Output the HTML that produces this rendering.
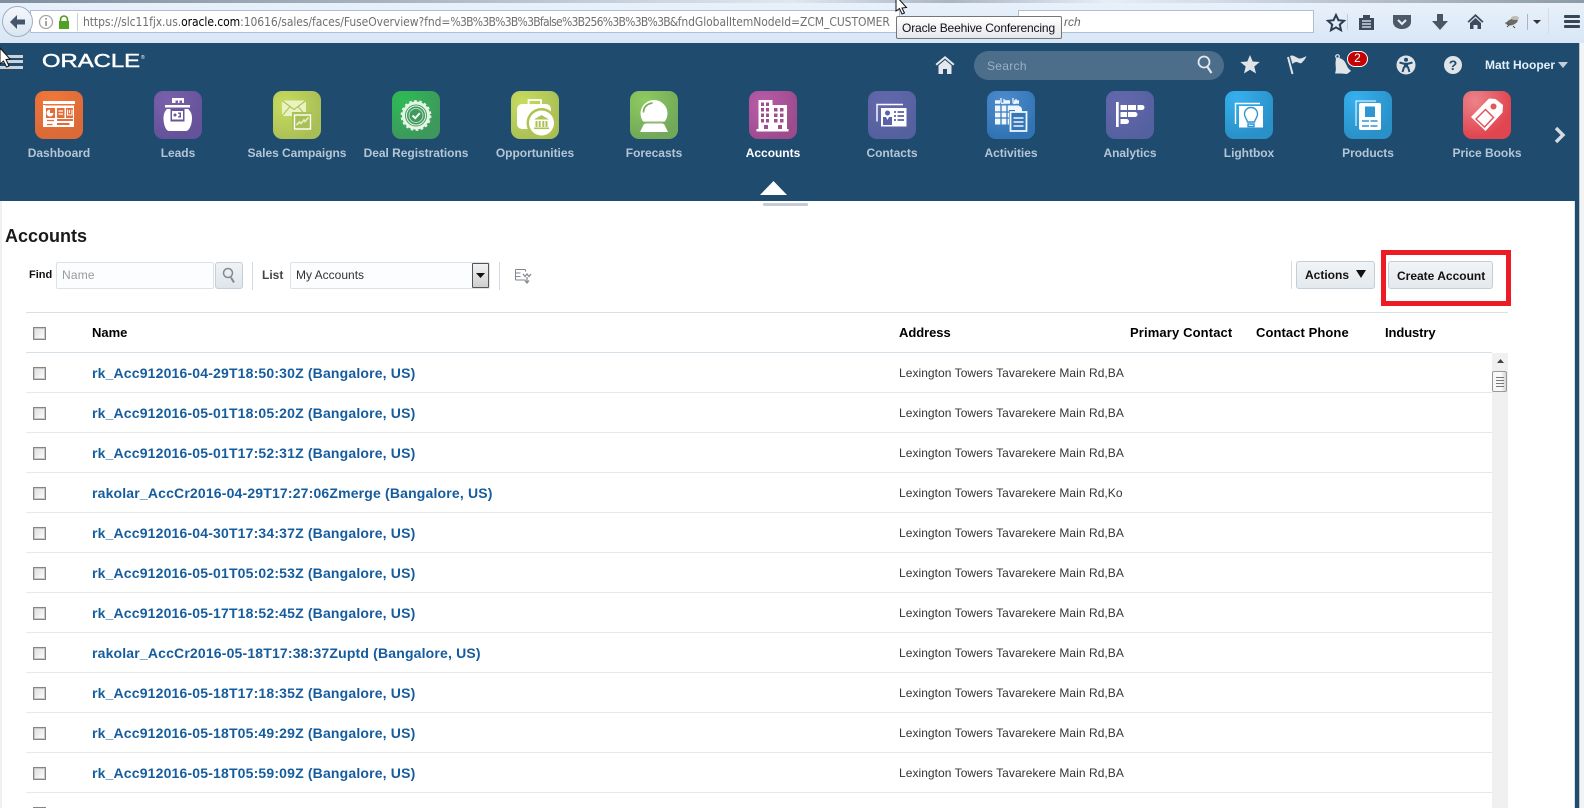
<!DOCTYPE html>
<html lang="en"><head><meta charset="utf-8"><title>Accounts</title>
<style>
html,body{margin:0;padding:0;width:1584px;height:808px;overflow:hidden;background:#fff}
body{position:relative;font-family:"Liberation Sans",Arial,sans-serif}
div,span,a,svg{position:absolute;display:block}
.t{white-space:nowrap}
#chrome{left:0;top:0;width:1584px;height:43px;background:linear-gradient(#eaf2fb,#d8e6f6)}
#nav{left:0;top:43px;width:1584px;height:158px;background:#1f4b6e}
#panel{left:0;top:201px;width:1575px;height:607px;background:#fff;border-radius:0 3px 0 0}
.ic{top:91px;width:48px;height:48px;border-radius:9px}
.lb{top:145px;width:140px;text-align:center;font-size:12px;font-weight:bold;color:#b4c6d6;line-height:16px;white-space:nowrap;letter-spacing:-.03px}
.sep{width:1px;height:28px;top:261px;background:#d5dde4}
.btn{border:1px solid #c4ced7;border-radius:3px;background:linear-gradient(#f1f4f6,#e4e9ed);box-sizing:border-box;top:261px;height:28px}
.hd{top:325px;font-size:13px;font-weight:bold;color:#000;line-height:16px;white-space:nowrap}
.ln{left:26px;width:1466px;height:1px;background:#e8e8e8}
.cb{left:33px;width:11px;height:11px;border:1px solid #858585;outline:1px solid #c8c8c8;outline-offset:-2px;background:linear-gradient(135deg,#dcdcdc,#fff)}
.nm{left:92px;font-size:14px;font-weight:bold;color:#145c9e;line-height:16px;white-space:nowrap;letter-spacing:.17px;text-decoration:none}
.ad{left:899px;width:228px;overflow:hidden;font-size:12px;color:#333;line-height:16px;white-space:nowrap;letter-spacing:.05px}
</style></head><body>

<div id="chrome">
  <div style="left:0;top:0;width:1584px;height:3px;background:linear-gradient(90deg,#7f8fa0,#a8b4c2 25%,#dfe7f0 50%,#a9b5c2 60%,#e6eef8 70%,#8d9aa8)"></div>
  <div style="left:30px;top:10px;width:870px;height:23px;background:#fff;border:1px solid #aebfd2;box-sizing:border-box"></div>
  <div style="left:1018px;top:10px;width:296px;height:23px;background:#fff;border:1px solid #aebfd2;box-sizing:border-box"></div>
  <div class="t" style="left:1064px;top:15px;font-size:12px;font-style:italic;color:#666;line-height:14px">rch</div>
  <div style="left:2px;top:6px;width:29px;height:29px;border-radius:50%;background:linear-gradient(#f4f8fc,#dbe6f2);border:1px solid #9fb0c4"></div>
  <svg style="left:8px;top:13px" width="20" height="18" viewBox="0 0 20 18"><path d="M9 2 L2 9 L9 16 L9 11.5 L17 11.5 L17 6.5 L9 6.5Z" fill="#46566a"/></svg>
  <svg style="left:38px;top:14px" width="16" height="16" viewBox="0 0 16 16"><circle cx="8" cy="8" r="6.5" fill="none" stroke="#a7a7a7" stroke-width="1.3"/><rect x="7.2" y="7" width="1.6" height="5" fill="#8f8f8f"/><rect x="7.2" y="4" width="1.6" height="1.7" fill="#8f8f8f"/></svg>
  <svg style="left:58px;top:15px" width="12" height="14" viewBox="0 0 12 14"><path d="M2.5 6V4.5a3.5 3.5 0 0 1 7 0V6" fill="none" stroke="#4d9a1e" stroke-width="1.6"/><rect x="1" y="6" width="10" height="8" fill="#52a024"/></svg>
  <div style="left:77px;top:13px;width:1px;height:18px;background:#c9ced4"></div>
  <div class="t" style="left:83px;top:15px;font-size:12px;line-height:15px;color:#707070;letter-spacing:-.07px;font-family:'DejaVu Sans Condensed','Liberation Sans',sans-serif;width:813px;overflow:hidden">https://slc11fjx.us.<span style="position:static;display:inline;color:#000">oracle.com</span>:10616/sales/faces/FuseOverview?fnd=<span style="position:static;display:inline;letter-spacing:-.72px">%3B%3B%3B%3Bfalse%3B256%3B%3B%3B&amp;</span>fndGlobalItemNodeId=ZCM_CUSTOMER</div>

  <!-- browser toolbar -->
  <svg style="left:1326px;top:13px" width="20" height="19" viewBox="0 0 20 19"><path d="M10 2l2.4 5.2 5.6.6-4.2 3.8 1.2 5.6L10 14.4 5 17.200l1.200-5.600L2 7.800l5.600-.6z" fill="none" stroke="#2e3d4e" stroke-width="2"/></svg>
  <div style="left:1347px;top:14px;width:1px;height:16px;background:#c2ccd8"></div>
  <svg style="left:1358px;top:13px" width="17" height="18" viewBox="0 0 17 18"><path d="M1 5h4V2h7v3h4v12H1z" fill="#3d4b5c"/><path d="M4 8h9M4 11h9M4 14h9" stroke="#e8eef6" stroke-width="1.300"/></svg>
  <svg style="left:1391px;top:13px" width="22" height="18" viewBox="0 0 22 18"><path d="M2 2h18v7c0 4-4 7-9 7s-9-3-9-7z" fill="#4b5968"/><path d="M7 7l4 4 4-4" fill="none" stroke="#e8eef6" stroke-width="2"/></svg>
  <svg style="left:1431px;top:13px" width="18" height="18" viewBox="0 0 18 18"><path d="M6 1h6v7h5l-8 9-8-9h5z" fill="#4a5562"/></svg>
  <svg style="left:1467px;top:13px" width="17" height="17" viewBox="0 0 17 17"><path d="M8.500 1L0.500 8.500l1.200 1.200 6.800-6.200 6.800 6.200 1.200-1.200z" fill="#3d4b5c"/><path d="M3 10l5.500-5 5.500 5v6h-3.500v-4h-4v4H3z" fill="#3d4b5c"/></svg>
  <svg style="left:1503px;top:14px" width="18" height="15" viewBox="0 0 18 15"><ellipse cx="9" cy="8" rx="6" ry="3" fill="#6d6a62" transform="rotate(-20 9 8)"/><ellipse cx="12" cy="4" rx="4" ry="2" fill="#c0bcb4"/><path d="M4 13l3-3M2 9l4 0M10 12l2 2" stroke="#555" stroke-width="1"/></svg>
  <div style="left:1527px;top:14px;width:1px;height:16px;background:#a9b5c2"></div>
  <svg style="left:1533px;top:20px" width="9" height="5" viewBox="0 0 9 5"><path d="M0 0h8L4 4z" fill="#333"/></svg>
  <div style="left:1548px;top:8px;width:1px;height:26px;background:#d3dde9"></div>
  <div style="left:1564px;top:15px;width:16px;height:3px;background:#3a4654;border-radius:1px"></div>
  <div style="left:1564px;top:20px;width:16px;height:3px;background:#3a4654;border-radius:1px"></div>
  <div style="left:1564px;top:25px;width:16px;height:3px;background:#3a4654;border-radius:1px"></div>
</div>

<div id="nav"></div>
<div style="left:1579px;top:43px;width:5px;height:765px;background:#f1f3f5;border-left:1px solid #bfc5cb;box-sizing:border-box"></div>
<div style="left:1575px;top:201px;width:4px;height:607px;background:#1f4b6e"></div>

<!-- top bar of nav -->
<div style="left:0;top:55px;width:23px;height:3px;background:#c9d3dc"></div>
<div style="left:0;top:60px;width:23px;height:3px;background:#c9d3dc"></div>
<div style="left:0;top:66px;width:23px;height:3px;background:#c9d3dc"></div>
<svg style="left:0;top:47px" width="12" height="22" viewBox="0 0 12 22"><path d="M0 1 L10 12 L6 12.500 L9 19 L6.500 20 L3.500 14 L0 17Z" fill="#fff" stroke="#111" stroke-width="1"/></svg>
<svg style="left:40px;top:50px" width="108" height="20" viewBox="0 0 108 20"><text x="2" y="17" font-family="Liberation Sans,sans-serif" font-size="18" fill="#fff" stroke="#fff" stroke-width=".45" textLength="98" lengthAdjust="spacingAndGlyphs">ORACLE</text><text x="101" y="9" font-family="Liberation Sans,sans-serif" font-size="5" fill="#fff">®</text></svg>

<svg style="left:935px;top:55px" width="20" height="19" viewBox="0 0 20 19"><path d="M10 1L0.500 9l1.300 1.500L10 3.600l8.200 6.900L19.500 9z" fill="#e4e8ec"/><path d="M3.500 10.500L10 5l6.500 5.500V19h-4.500v-5h-4v5H3.500z" fill="#e4e8ec"/></svg>
<div style="left:974px;top:51px;width:250px;height:29px;border-radius:15px;background:#4c6e8b"></div>
<div class="t" style="left:987px;top:59px;font-size:12px;line-height:15px;color:#9bb0c2;letter-spacing:.3px">Search</div>
<svg style="left:1196px;top:54px" width="20" height="21" viewBox="0 0 20 21"><circle cx="8" cy="8" r="5.500" fill="none" stroke="#e4e8ec" stroke-width="1.800"/><path d="M11.500 13l4 6" stroke="#e4e8ec" stroke-width="2.200"/></svg>
<svg style="left:1240px;top:55px" width="20" height="19" viewBox="0 0 20 19"><path d="M10 0l2.700 6.500 7 .5-5.400 4.500 1.700 7L10 14.800 4 18.500l1.700-7L.3 7l7-.5z" fill="#dfe4e9"/></svg>
<svg style="left:1287px;top:54px" width="21" height="21" viewBox="0 0 21 21"><path d="M1 3l4.500 17" stroke="#dfe4e9" stroke-width="2"/><path d="M3 2c4-2 7 3 10 2.500 2 0 4.500-1.500 6.500-2.500-1 3-3 5-5 7-2 1-3-1-5-1-1.500 0-3 1-4 2z" fill="#dfe4e9"/></svg>
<svg style="left:1333px;top:54px" width="20" height="21" viewBox="0 0 20 21"><circle cx="4.500" cy="2.500" r="1.800" fill="none" stroke="#dfe4e9" stroke-width="1.200"/><path d="M3 4C6 3 10 5 12 8L15 14L18 17L14 20L8 19.500L2 19.500C3.500 16 2.500 12 2.500 9Z" fill="#dfe4e9"/></svg>
<div style="left:1347px;top:51px;width:21px;height:16px;box-sizing:border-box;border:1.500px solid #fff;border-radius:8px;background:#c40000;color:#fff;font-size:12px;line-height:13px;text-align:center">2</div>
<svg style="left:1396px;top:55px" width="20" height="20" viewBox="0 0 20 20"><circle cx="10" cy="10" r="9.500" fill="#dfe4e9"/><circle cx="10" cy="4.800" r="2" fill="#1f4b6e"/><path d="M3.500 7.500L8 8.700h4l4.500-1.200M10 8.700v3.500M8.200 11.500L6.500 17M11.800 11.500L13.500 17" fill="none" stroke="#1f4b6e" stroke-width="2"/><rect x="8" y="8" width="4" height="4.500" fill="#1f4b6e"/></svg>
<div style="left:1444px;top:56px;width:18px;height:18px;border-radius:50%;background:#dfe4e9;color:#1f4b6e;font-size:14px;font-weight:bold;line-height:18px;text-align:center">?</div>
<div class="t" style="left:1485px;top:58px;font-size:12px;font-weight:bold;line-height:15px;color:#e2f0fb">Matt Hooper</div>
<svg style="left:1558px;top:62px" width="10" height="6" viewBox="0 0 10 6"><path d="M0 0h10L5 6z" fill="#c3ced8"/></svg>

<!-- Dashboard -->
<div class="ic" style="left:35px;background:radial-gradient(circle at 35% 15%,#f2763a,#db6a37 75%)"></div>
<svg style="left:35px;top:91px" width="48" height="48" viewBox="0 0 48 48"><rect x="8" y="10" width="32" height="3" fill="#fff"/><rect x="10" y="14.500" width="29" height="21.500" fill="#fff"/><rect x="8" y="14" width="2" height="22" fill="#fff"/>
<rect x="11" y="17" width="9" height="10" fill="#e56c38"/><path d="M15 18.500a3.500 3.500 0 1 0 3.500 3.500H15z" fill="#fff"/>
<rect x="22" y="17" width="7.500" height="10" fill="#e56c38"/><path d="M23.500 20h4.500M23.500 23h4.500" stroke="#fff" stroke-width="1.200"/>
<rect x="31" y="17" width="7" height="10" fill="#e56c38"/><path d="M32.500 18.500v5.500h4.500v-5.500M34.500 19v3" fill="none" stroke="#fff" stroke-width="1.100"/>
<path d="M12 29.500h7M12 33.500h5.500" stroke="#e56c38" stroke-width="1.200"/><rect x="22" y="28" width="16" height="2" fill="#e56c38"/><rect x="22" y="32" width="12.500" height="2" fill="#e56c38"/></svg>

<!-- Leads -->
<div class="ic" style="left:154px;background:radial-gradient(circle at 30% 20%,#7b60ab,#64529a 75%)"></div>
<svg style="left:154px;top:91px" width="48" height="48" viewBox="0 0 48 48"><path d="M18 12V7h12v5h-2V9.500h-2.500V12h-1.500V9.500h-2.500V12h-1.500V9.500H20V12z" fill="#fff"/><rect x="11" y="14" width="25" height="2.500" fill="#fff"/><path d="M13 18h21c2.500 2 4 5 4 9 0 7-3 13-6 13H15c-3 0-5.500-6-5.500-13 0-4 1.500-7 3.500-9z" fill="#fff"/><rect x="16.500" y="17.500" width="14" height="13" fill="#67549c"/><rect x="18" y="20" width="11" height="8.500" fill="#fff"/><circle cx="21" cy="24" r="1.500" fill="#67549c"/><rect x="24" y="21.500" width="3" height="5" fill="#67549c"/><rect x="24" y="22.800" width="1.500" height="2.400" fill="#fff"/></svg>

<!-- Sales Campaigns -->
<div class="ic" style="left:273px;background:radial-gradient(circle at 25% 30%,#c7dc5e,#a9bf56 75%)"></div>
<svg style="left:273px;top:91px" width="48" height="48" viewBox="0 0 48 48"><rect x="9" y="9.500" width="24" height="15.500" fill="#eaf2c2"/><path d="M9 9.500l12 9 12-9M9 25l8-9.500M33 25l-8-9.500" fill="none" stroke="#aec354" stroke-width="1.100"/><rect x="19" y="21" width="20" height="18" fill="#aac056"/><rect x="21.500" y="24" width="16" height="14" fill="#aac056" stroke="#fff" stroke-width="1.400"/><path d="M23.500 34l3-3 1.500 1.500 3-3.500 1 1.500 3.500-4" fill="none" stroke="#e6efbe" stroke-width="1.600"/></svg>

<!-- Deal Registrations -->
<div class="ic" style="left:392px;background:radial-gradient(circle at 25% 20%,#2dbb55,#3e975c 75%)"></div>
<svg style="left:392px;top:91px" width="48" height="48" viewBox="0 0 48 48"><circle cx="24" cy="24.500" r="12.500" fill="none" stroke="#e7f4e5" stroke-width="3"/><circle cx="24" cy="24.500" r="14.200" fill="none" stroke="#e7f4e5" stroke-width="2.400" stroke-dasharray="2.600 2.400"/><circle cx="24" cy="24.500" r="9.500" fill="#41985f" stroke="#e7f4e5" stroke-width="1"/><circle cx="24" cy="24.500" r="7" fill="none" stroke="#b8dcc0" stroke-width="1"/><path d="M20.500 24.500l2.700 2.700 4.600-5" fill="none" stroke="#f0f8ee" stroke-width="2"/></svg>

<!-- Opportunities -->
<div class="ic" style="left:511px;background:radial-gradient(circle at 25% 25%,#c7dc5e,#a9bf56 75%)"></div>
<svg style="left:511px;top:91px" width="48" height="48" viewBox="0 0 48 48"><path d="M17.500 13V9h12.500v4" fill="none" stroke="#fff" stroke-width="1.800"/><rect x="6" y="13" width="34" height="25" rx="5" fill="#fff"/><circle cx="30.500" cy="32" r="15" fill="#aec354"/><circle cx="30.500" cy="32" r="12.500" fill="#fff"/><path d="M30.500 24l-7.500 4.500h15z" fill="#aec354"/><path d="M25.500 30v6M28.700 30v6M32.300 30v6M35.500 30v6" stroke="#aec354" stroke-width="2"/><rect x="23" y="36.500" width="15" height="1.600" fill="#aec354"/></svg>

<!-- Forecasts -->
<div class="ic" style="left:630px;background:radial-gradient(circle at 30% 20%,#8ecb60,#72a859 75%)"></div>
<svg style="left:630px;top:91px" width="48" height="48" viewBox="0 0 48 48"><circle cx="24" cy="22.500" r="13.500" fill="#fff"/><path d="M13.500 21.500c0-5 3-8.500 9-9.500" fill="none" stroke="#78ad5a" stroke-width="1.700"/><path d="M14 33h20l4 8H10z" fill="#fff"/><rect x="10" y="30.500" width="28" height="2" fill="#78ad5a" opacity=".85"/></svg>

<!-- Accounts -->
<div class="ic" style="left:749px;background:radial-gradient(circle at 30% 30%,#bb5cab,#9d4b8d 75%)"></div>
<svg style="left:749px;top:91px" width="48" height="48" viewBox="0 0 48 48"><path d="M9.500 9H23.500V14H38V38H9.500z" fill="#fff"/><rect x="7.500" y="38" width="32" height="2.500" fill="#fff"/><g fill="#a14e90"><rect x="12" y="11.500" width="3" height="3.500"/><rect x="17" y="11.500" width="3" height="3.500"/><rect x="12" y="17" width="3" height="3.500"/><rect x="17" y="17" width="3" height="3.500"/><rect x="12" y="22.500" width="3" height="3.500"/><rect x="17" y="22.500" width="3" height="3.500"/><rect x="12" y="28" width="3" height="3.500"/><rect x="17" y="28" width="3" height="3.500"/><rect x="25" y="17" width="3.500" height="3.500"/><rect x="31" y="17" width="3.500" height="3.500"/><rect x="25" y="22.500" width="3.500" height="3.500"/><rect x="31" y="22.500" width="3.500" height="3.500"/><rect x="25" y="28" width="3.500" height="3.500"/><rect x="31" y="28" width="3.500" height="3.500"/><rect x="15" y="34" width="4" height="4"/><rect x="29" y="34" width="4" height="4"/></g></svg>

<!-- Contacts -->
<div class="ic" style="left:868px;background:radial-gradient(circle at 40% 25%,#6468ae,#55619f 75%)"></div>
<svg style="left:868px;top:91px" width="48" height="48" viewBox="0 0 48 48"><path d="M35 13.500H9V30.500" fill="none" stroke="#fff" stroke-width="1.400"/><rect x="13" y="17" width="25.500" height="18.500" fill="#fff"/><circle cx="19.500" cy="22" r="2.500" fill="#5864a5"/><path d="M15 34v-8h3l1.500 3 1.500-3h3v8z" fill="#5864a5"/><path d="M26 21h2M29.500 21h6.500M26 25h2M29.500 25h6.500M26 29h2M29.500 29h6.500" stroke="#5864a5" stroke-width="1.700"/></svg>

<!-- Activities -->
<div class="ic" style="left:987px;background:radial-gradient(circle at 35% 20%,#4d8ccd,#3174b4 75%)"></div>
<svg style="left:987px;top:91px" width="48" height="48" viewBox="0 0 48 48"><path d="M8 11h5M17 11h6M27 11h5" stroke="#eef6ff" stroke-width="3.500"/><path d="M14 7v4a1.500 1.500 0 0 0 3 0V8M26 7v4a1.500 1.500 0 0 0 3 0V8" fill="none" stroke="#eef6ff" stroke-width="1.300"/><rect x="8" y="14.500" width="24" height="19" fill="#eef6ff"/><path d="M14 14.500v19M20 14.500v19M8 21h24M8 27h24" stroke="#3a7ab9" stroke-width="1.300"/><rect x="22" y="19" width="18" height="21" fill="#3577b6"/><rect x="23.500" y="21" width="16" height="19" fill="#3577b6" stroke="#eef6ff" stroke-width="1.800"/><path d="M28 21v-2.500a3.500 3.500 0 0 1 7 0V21z" fill="#eef6ff"/><path d="M26.500 27h10M26.500 31h10M26.500 35h10" stroke="#eef6ff" stroke-width="1.500"/></svg>

<!-- Analytics -->
<div class="ic" style="left:1106px;background:radial-gradient(circle at 30% 25%,#6468ae,#55619f 75%)"></div>
<svg style="left:1106px;top:91px" width="48" height="48" viewBox="0 0 48 48" fill="#fff"><rect x="10" y="11" width="2.700" height="25"/><rect x="14.500" y="14" width="6.500" height="5"/><rect x="22" y="14" width="8" height="5"/><path d="M31.500 14h4.500a2.500 2.500 0 0 1 0 5h-4.500z"/><rect x="14.500" y="21" width="6.500" height="5"/><path d="M22 21h7a2.500 2.500 0 0 1 0 5h-7z"/><path d="M14.500 28h6a2.500 2.500 0 0 1 0 5h-6z"/></svg>

<!-- Lightbox -->
<div class="ic" style="left:1225px;background:radial-gradient(circle at 25% 15%,#35b0ee,#2a90c8 75%)"></div>
<svg style="left:1225px;top:91px" width="48" height="48" viewBox="0 0 48 48"><path d="M35 12.500H10.500V33" fill="none" stroke="#fff" stroke-width="1.400"/><rect x="14" y="15" width="24" height="21.500" fill="#fff"/><path d="M22.500 31c0-2-3-4.500-3-8a6.500 6.500 0 0 1 13 0c0 3.500-3 6-3 8zM23 33h6v2.500h-6z" fill="none" stroke="#2f97d2" stroke-width="1.400"/></svg>

<!-- Products -->
<div class="ic" style="left:1344px;background:radial-gradient(circle at 25% 15%,#35b0ee,#2a90c8 75%)"></div>
<svg style="left:1344px;top:91px" width="48" height="48" viewBox="0 0 48 48"><path d="M32 10H12V35" fill="none" stroke="#fff" stroke-width="1"/><rect x="15" y="12" width="22" height="27" rx="2" fill="#fff"/><rect x="21" y="15.500" width="10" height="10.500" fill="#2e96d1"/><path d="M18 30h7M26.500 30h7M18 35h7M26.500 35h7" stroke="#2e96d1" stroke-width="1.600"/></svg>

<!-- Price Books -->
<div class="ic" style="left:1463px;background:radial-gradient(circle at 25% 20%,#ed8289,#e1454f 70%)"></div>
<svg style="left:1463px;top:91px" width="48" height="48" viewBox="0 0 48 48"><path d="M26 7.500l6.500.500 7.500 6-.5 7.500L22.500 40 8 26z" fill="#fff"/><circle cx="30.500" cy="15.500" r="3" fill="#e4545c"/><path d="M22.500 18.500l8 8-9 9.500-8.500-8z" fill="none" stroke="#e4545c" stroke-width="1.500"/></svg>

<!-- labels -->
<div class="lb" style="left:-11px">Dashboard</div>
<div class="lb" style="left:108px">Leads</div>
<div class="lb" style="left:227px">Sales Campaigns</div>
<div class="lb" style="left:346px">Deal Registrations</div>
<div class="lb" style="left:465px">Opportunities</div>
<div class="lb" style="left:584px">Forecasts</div>
<div class="lb" style="left:703px;color:#fff">Accounts</div>
<div class="lb" style="left:822px">Contacts</div>
<div class="lb" style="left:941px">Activities</div>
<div class="lb" style="left:1060px">Analytics</div>
<div class="lb" style="left:1179px">Lightbox</div>
<div class="lb" style="left:1298px">Products</div>
<div class="lb" style="left:1417px">Price Books</div>

<svg style="left:1553px;top:126px" width="14" height="18" viewBox="0 0 14 18"><path d="M3 2l7 7-7 7" fill="none" stroke="#d5dbe1" stroke-width="3.400"/></svg>
<svg style="left:760px;top:181px" width="27" height="14" viewBox="0 0 27 14"><path d="M13.500 0L27 14H0z" fill="#fff"/></svg>

<div id="panel"></div>
<div style="left:0;top:201px;width:2px;height:607px;background:#eef1f4"></div>
<div style="left:1574px;top:201px;width:1px;height:607px;background:#d9dfe4"></div>
<div style="left:763px;top:203px;width:45px;height:3px;background:#c5ccd6;border-radius:1px"></div>

<div class="t" style="left:5px;top:226px;font-size:18px;font-weight:bold;line-height:21px;color:#1a1a1a">Accounts</div>

<div class="t" style="left:29px;top:268px;font-size:11px;font-weight:bold;line-height:14px;color:#111">Find</div>
<div style="left:56px;top:262px;width:158px;height:27px;box-sizing:border-box;border:1px solid #dbe2e8;border-radius:2px;background:#fcfdfe"></div>
<div class="t" style="left:62px;top:268px;font-size:12px;line-height:15px;color:#9a9a9a;letter-spacing:.2px">Name</div>
<div class="btn" style="left:215px;top:262px;width:28px;height:27px;background:linear-gradient(#f0f3f5,#e0e5ea)"></div>
<svg style="left:220px;top:266px" width="18" height="19" viewBox="0 0 18 19"><circle cx="8" cy="7" r="4.500" fill="none" stroke="#7e8992" stroke-width="1.500"/><path d="M11 11.500l3 5" stroke="#7e8992" stroke-width="2"/></svg>
<div class="sep" style="left:252px;top:262px"></div>
<div class="t" style="left:262px;top:268px;font-size:12px;font-weight:bold;line-height:14px;color:#444">List</div>
<div style="left:290px;top:262px;width:200px;height:27px;box-sizing:border-box;border:1px solid #dbe2e8;border-radius:2px;background:#fcfdfe"></div>
<div class="t" style="left:296px;top:268px;font-size:12px;line-height:14px;color:#333">My Accounts</div>
<div style="left:472px;top:263px;width:17px;height:25px;box-sizing:border-box;border:1px solid #555;border-radius:1px;background:linear-gradient(#f2f2f2,#cfcfcf)"></div>
<svg style="left:476px;top:273px" width="9" height="5" viewBox="0 0 9 5"><path d="M0 0h9L4.500 5z" fill="#111"/></svg>
<div class="sep" style="left:499px;top:262px"></div>
<svg style="left:515px;top:268px" width="17" height="16" viewBox="0 0 17 16" fill="none" stroke="#80878e" stroke-width="1"><path d="M.5 1.500h10M.5 5h5M.5 8.500h5M.5 12h10M.5 1.500v10.500M10.500 1.500v2"/><path d="M8 6l2 2.500L12 6l2 2.500L16 6M12 9v5M10 12.500l2 2.500 2-2.500" stroke-width="1.200"/></svg>

<div class="sep" style="left:1291px"></div>
<div class="btn" style="left:1296px;width:79px"></div>
<div class="t" style="left:1305px;top:268px;font-size:12px;font-weight:bold;line-height:14px;color:#111">Actions</div>
<svg style="left:1356px;top:270px" width="10" height="8" viewBox="0 0 10 8"><path d="M0 0h10L5 8z" fill="#111"/></svg>
<div class="btn" style="left:1388px;width:105px"></div>
<div class="t" style="left:1397px;top:269px;font-size:12px;font-weight:bold;line-height:14px;color:#111">Create Account</div>
<div style="left:1381px;top:250px;width:130px;height:56px;box-sizing:border-box;border:5px solid #ed1c24"></div>

<!-- table header -->
<div style="left:26px;top:312px;width:1482px;height:1px;background:#d9e1e8"></div>
<div style="left:26px;top:352px;width:1466px;height:1px;background:#d9e1e8"></div>
<div class="cb" style="top:327px"></div>
<div class="hd" style="left:92px">Name</div>
<div class="hd" style="left:899px;letter-spacing:-.05px">Address</div>
<div class="hd" style="left:1130px;letter-spacing:.13px">Primary Contact</div>
<div class="hd" style="left:1256px;letter-spacing:.08px">Contact Phone</div>
<div class="hd" style="left:1385px;letter-spacing:-.1px">Industry</div>

<!-- rows -->
<div class="cb" style="top:367px"></div><a class="nm" style="top:365px">rk_Acc912016-04-29T18:50:30Z (Bangalore, US)</a><div class="ad" style="top:365px">Lexington Towers Tavarekere Main Rd,BA</div><div class="ln" style="top:392px"></div>
<div class="cb" style="top:407px"></div><a class="nm" style="top:405px">rk_Acc912016-05-01T18:05:20Z (Bangalore, US)</a><div class="ad" style="top:405px">Lexington Towers Tavarekere Main Rd,BA</div><div class="ln" style="top:432px"></div>
<div class="cb" style="top:447px"></div><a class="nm" style="top:445px">rk_Acc912016-05-01T17:52:31Z (Bangalore, US)</a><div class="ad" style="top:445px">Lexington Towers Tavarekere Main Rd,BA</div><div class="ln" style="top:472px"></div>
<div class="cb" style="top:487px"></div><a class="nm" style="top:485px">rakolar_AccCr2016-04-29T17:27:06Zmerge (Bangalore, US)</a><div class="ad" style="top:485px">Lexington Towers Tavarekere Main Rd,Ko</div><div class="ln" style="top:512px"></div>
<div class="cb" style="top:527px"></div><a class="nm" style="top:525px">rk_Acc912016-04-30T17:34:37Z (Bangalore, US)</a><div class="ad" style="top:525px">Lexington Towers Tavarekere Main Rd,BA</div><div class="ln" style="top:552px"></div>
<div class="cb" style="top:567px"></div><a class="nm" style="top:565px">rk_Acc912016-05-01T05:02:53Z (Bangalore, US)</a><div class="ad" style="top:565px">Lexington Towers Tavarekere Main Rd,BA</div><div class="ln" style="top:592px"></div>
<div class="cb" style="top:607px"></div><a class="nm" style="top:605px">rk_Acc912016-05-17T18:52:45Z (Bangalore, US)</a><div class="ad" style="top:605px">Lexington Towers Tavarekere Main Rd,BA</div><div class="ln" style="top:632px"></div>
<div class="cb" style="top:647px"></div><a class="nm" style="top:645px">rakolar_AccCr2016-05-18T17:38:37Zuptd (Bangalore, US)</a><div class="ad" style="top:645px">Lexington Towers Tavarekere Main Rd,BA</div><div class="ln" style="top:672px"></div>
<div class="cb" style="top:687px"></div><a class="nm" style="top:685px">rk_Acc912016-05-18T17:18:35Z (Bangalore, US)</a><div class="ad" style="top:685px">Lexington Towers Tavarekere Main Rd,BA</div><div class="ln" style="top:712px"></div>
<div class="cb" style="top:727px"></div><a class="nm" style="top:725px">rk_Acc912016-05-18T05:49:29Z (Bangalore, US)</a><div class="ad" style="top:725px">Lexington Towers Tavarekere Main Rd,BA</div><div class="ln" style="top:752px"></div>
<div class="cb" style="top:767px"></div><a class="nm" style="top:765px">rk_Acc912016-05-18T05:59:09Z (Bangalore, US)</a><div class="ad" style="top:765px">Lexington Towers Tavarekere Main Rd,BA</div><div class="ln" style="top:792px"></div>
<div class="cb" style="top:807px"></div>

<!-- scrollbar -->
<div style="left:1492px;top:353px;width:16px;height:455px;background:#f0f0f0"></div>
<svg style="left:1497px;top:359px" width="7" height="4" viewBox="0 0 7 4"><path d="M3.500 0L7 4H0z" fill="#444"/></svg>
<div style="left:1492px;top:371px;width:15px;height:21px;box-sizing:border-box;border:1px solid #999;border-radius:2px;background:linear-gradient(90deg,#f6f6f6,#fbfbfb 60%,#d4d4d4)"></div>
<div style="left:1496px;top:377px;width:8px;height:1px;background:#777"></div>
<div style="left:1496px;top:380px;width:8px;height:1px;background:#777"></div>
<div style="left:1496px;top:383px;width:8px;height:1px;background:#777"></div>
<div style="left:1496px;top:386px;width:8px;height:1px;background:#777"></div>

<!-- tooltip + pointer -->
<div style="left:896px;top:16px;width:166px;height:23px;box-sizing:border-box;border:1px solid #767676;border-radius:2px;background:linear-gradient(#fff,#e6e6ef);"></div>
<div class="t" style="left:902px;top:21px;font-size:12px;line-height:14px;color:#111;letter-spacing:-.14px">Oracle Beehive Conferencing</div>
<svg style="left:895px;top:0" width="14" height="15" viewBox="0 0 14 15"><path d="M1 -4V11L4.500 8.500 7 14l2.500-1-2.500-5 4.500-.5z" fill="#fff" stroke="#111" stroke-width="1"/></svg>
</body></html>
